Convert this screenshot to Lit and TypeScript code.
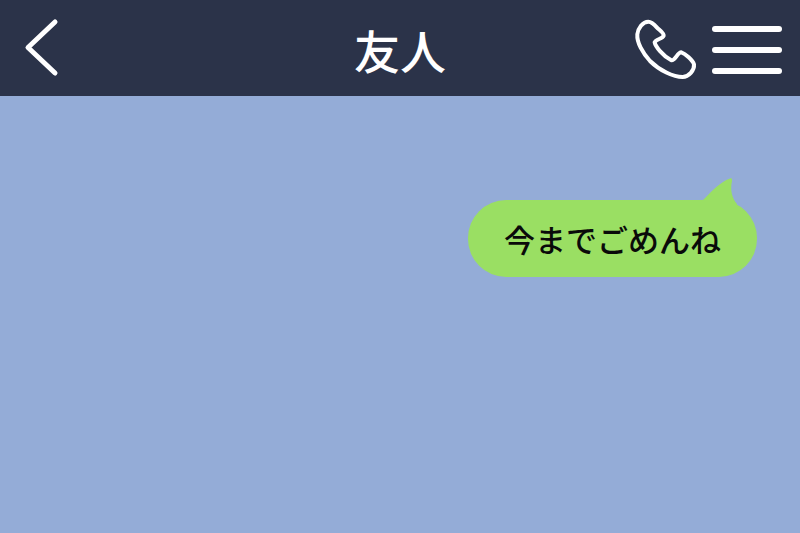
import { LitElement, html, css } from "lit";
import { customElement } from "lit/decorators.js";

@customElement("app-root")
export class AppRoot extends LitElement {
  static styles = css`
    :host { display: block; width: 800px; height: 533px; overflow: hidden; background: #94acd7; }
    .bar {
      height: 96px; background: #2b3349; color: #fff; box-sizing: border-box;
      padding: 0 18px; display: grid; grid-template-columns: 1fr auto 1fr; align-items: center;
    }
    .back { display: block; width: 40px; height: 60px; margin-left: 6px; }
    .title {
      font: 500 46px/1 "Noto Sans CJK JP", sans-serif; letter-spacing: 0;
      margin-top: 1px;
    }
    .actions { display: flex; justify-content: flex-end; align-items: center; gap: 14px; }
    .phone { display: block; width: 64px; height: 64px; margin-top: 4px; }
    .menu { display: flex; flex-direction: column; gap: 15px; width: 70px; margin-top: 4px; }
    .menu span { display: block; height: 6px; border-radius: 3px; background: #fff; }
    .chat { display: flex; justify-content: flex-end; padding: 104px 43px 0 0; }
    .bubble {
      position: relative; height: 77px; width: 289px; box-sizing: border-box;
      display: flex; align-items: center; justify-content: center;
      background: #9adf63; border-radius: 38px; color: #0a0a0a;
      font: 500 31px/1 "Noto Sans CJK JP", sans-serif;
    }
    .tail { position: absolute; right: 20px; top: -22px; width: 34px; height: 30px; }
  `;

  render() {
    return html`
      <div class="bar">
        <svg class="back" viewBox="0 0 40 60" fill="none" stroke="#fff" stroke-width="5" stroke-linecap="round" stroke-linejoin="round">
          <path d="M31 4 L4 29.5 L31 55"/>
        </svg>
        <div class="title">友人</div>
        <div class="actions">
          <svg class="phone" viewBox="42 57 192 192" fill="none" stroke="#fff" stroke-width="12" stroke-linejoin="round">
            <path d="M85 68 C96 68 104 78 112 87 C122 96 132 102 131 110 C128 120 108 120 104 130 C106 142 130 172 154 184 C166 186 172 160 184 160 C196 164 218 184 222 196 C224 214 206 234 188 234 C160 234 118 214 90 186 C68 162 50 130 52 106 C54 88 68 68 85 68 Z"/>
          </svg>
          <div class="menu"><span></span><span></span><span></span></div>
        </div>
      </div>
      <div class="chat">
        <div class="bubble">
          <svg class="tail" viewBox="0 0 34 30"><path fill="#9adf63" d="M0 22 C8 14 17 4 27 0.5 C29 0 29 1 29 3 C27 12 29 20 34 26 L34 30 L0 30 Z"/></svg>
          今までごめんね
        </div>
      </div>
    `;
  }
}
